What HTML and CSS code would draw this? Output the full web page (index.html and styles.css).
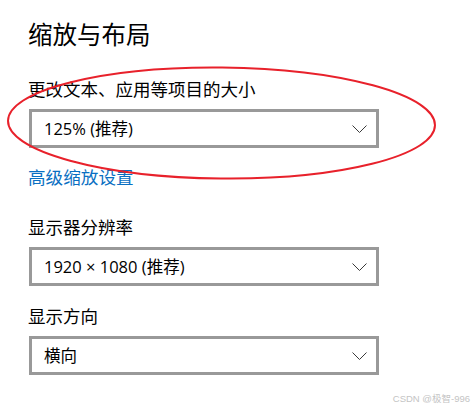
FILE: index.html
```html
<!DOCTYPE html>
<html lang="zh-CN">
<head>
<meta charset="utf-8">
<title>缩放与布局</title>
<link rel="stylesheet" href="styles.css">
</head>
<body>
<div class="page">
  <h1 class="title">缩放与布局</h1>
  <div class="label label-first">更改文本、应用等项目的大小</div>
  <div class="select">
    <span class="value">125% (推荐)</span>
    <svg class="chev" width="15" height="8" viewBox="0 0 15 8"><polyline points="0.5,0.5 7.5,7.5 14.5,0.5" fill="none" stroke="#3a3a3a" stroke-width="1"/></svg>
  </div>
  <a class="link" href="#">高级缩放设置</a>
  <div class="label label-gap">显示器分辨率</div>
  <div class="select">
    <span class="value">1920 × 1080 (推荐)</span>
    <svg class="chev" width="15" height="8" viewBox="0 0 15 8"><polyline points="0.5,0.5 7.5,7.5 14.5,0.5" fill="none" stroke="#3a3a3a" stroke-width="1"/></svg>
  </div>
  <div class="label label-after">显示方向</div>
  <div class="select">
    <span class="value">横向</span>
    <svg class="chev" width="15" height="8" viewBox="0 0 15 8"><polyline points="0.5,0.5 7.5,7.5 14.5,0.5" fill="none" stroke="#3a3a3a" stroke-width="1"/></svg>
  </div>
</div>
<svg class="annot" width="474" height="412" viewBox="0 0 474 412">
  <ellipse cx="221.5" cy="123" rx="213.5" ry="55.5" fill="none" stroke="#e8212b" stroke-width="2" transform="rotate(0.6 221.5 123)"/>
</svg>
<div class="watermark">CSDN @极智-996</div>
</body>
</html>
```
FILE: styles.css
```css
html, body {
  margin: 0;
  padding: 0;
  background: #fff;
}
body {
  width: 474px;
  height: 412px;
  position: relative;
  overflow: hidden;
  font-family: "Noto Sans", "Noto Sans CJK SC", sans-serif;
  color: #000;
}
.page {
  padding: 22px 0 0 28px;
  display: flex;
  flex-direction: column;
  align-items: flex-start;
}
.title {
  margin: 0;
  font-family: "Noto Sans CJK SC", sans-serif;
  font-weight: 400;
  font-size: 24.5px;
  line-height: 24px;
}
.label {
  font-family: "Noto Sans CJK SC", sans-serif;
  font-size: 17.5px;
  line-height: 18px;
  height: 18px;
}
.label-first { margin-top: 34px; }
.label-gap { margin-top: 32px; }
.label-after { margin-top: 21px; }
.select {
  box-sizing: border-box;
  width: 350px;
  height: 39px;
  margin-top: 11px;
  margin-left: 1px;
  border: 3px solid #999;
  display: flex;
  align-items: center;
  justify-content: space-between;
  padding: 0 9px 0 12px;
}
.value {
  font-family: "Open Sans", "Noto Sans CJK SC", sans-serif;
  font-size: 16.5px;
  line-height: 20px;
}
.chev {
  display: block;
}
.link {
  margin-top: 20px;
  font-family: "Noto Sans CJK SC", sans-serif;
  font-size: 17.6px;
  line-height: 18px;
  color: #0a6fc2;
  text-decoration: none;
}
.annot {
  position: absolute;
  left: 0;
  top: 0;
  pointer-events: none;
}
.watermark {
  position: absolute;
  right: 4px;
  bottom: 7px;
  font-family: "Liberation Sans", "Noto Sans CJK SC", sans-serif;
  font-size: 9.5px;
  line-height: 12px;
  color: #c4c4c4;
}
```
